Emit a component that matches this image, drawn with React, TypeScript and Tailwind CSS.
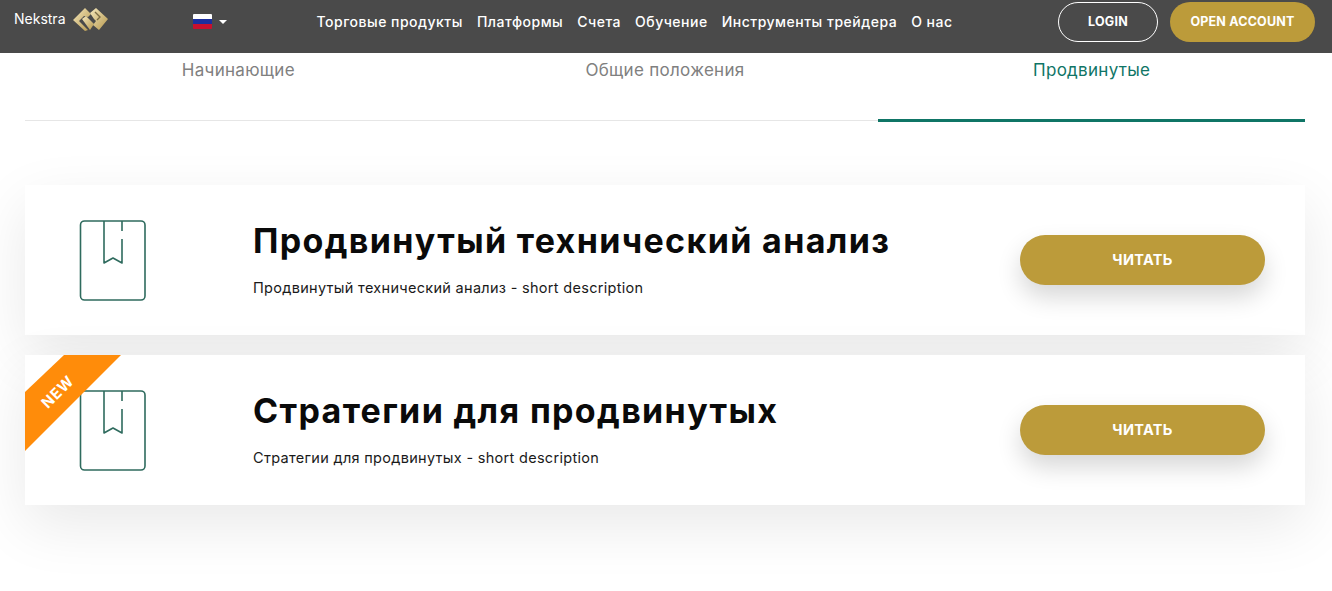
const font = "font-['Inter','Liberation_Sans',sans-serif]";

const navItems = [
  "Торговые продукты",
  "Платформы",
  "Счета",
  "Обучение",
  "Инструменты трейдера",
  "О нас",
];

const courses = [
  { title: "Продвинутый технический анализ", isNew: false },
  { title: "Стратегии для продвинутых", isNew: true },
];

function LogoMark() {
  return (
    <svg width="37" height="24" viewBox="0 0 37 24" className="ml-[6px]">
      <defs>
        <linearGradient id="gold" x1="0" y1="0" x2="1" y2="1">
          <stop offset="0" stopColor="#f5e8bd" />
          <stop offset="1" stopColor="#b5974d" />
        </linearGradient>
      </defs>
      <path d="M1 13 13 1l6 6-3 3-4-1-5 5 9 9-3 1z" fill="url(#gold)" />
      <path d="M10 12l4-3 8 8-4 6z" fill="url(#gold)" />
      <path d="M18 6l6-5 12 11-9 11-6-5 3-4-2-2z" fill="url(#gold)" />
      <path d="M23 5l5 5-3 3" stroke="#7c6c45" strokeWidth="1.4" fill="none" />
    </svg>
  );
}

function Flag() {
  return (
    <span className="flex h-[15px] w-[19px] flex-col overflow-hidden rounded-[1px]">
      <span className="h-[5px] bg-white" />
      <span className="h-[5px] bg-[#1c2f9e]" />
      <span className="h-[5px] bg-[#c8102e]" />
    </span>
  );
}

function BookIcon() {
  return (
    <svg width="67" height="81" viewBox="0 0 67 81" fill="none" stroke="#2f6b5e" strokeWidth="1.6" strokeLinejoin="round">
      <rect x="1.5" y="1" width="64.5" height="79" rx="4" />
      <path d="M25 1v42l9-5 9 5V19" />
      <path d="M43 1v10" />
    </svg>
  );
}

function NewRibbon() {
  return (
    <div className="absolute top-0 left-0 h-[96px] w-[96px] bg-[#ff8c0a] [clip-path:polygon(39px_0,96px_0,0_96px,0_37px)]">
      <span className="absolute top-[26px] left-[8px] w-[50px] -rotate-45 text-center text-[15px] font-bold tracking-[0.8px] text-white">
        NEW
      </span>
    </div>
  );
}

function CourseCard({ title, isNew }: { title: string; isNew: boolean }) {
  return (
    <div className="relative flex h-[150px] items-center bg-white pr-10 pl-[54px] shadow-[0_20px_60px_rgba(0,0,0,0.09)]">
      {isNew && <NewRibbon />}
      <BookIcon />
      <div className="ml-[107px] flex-1 pb-[2px]">
        <h2 className="text-[34px] leading-[40px] font-bold tracking-[1.35px] text-[#0a0a0a]">{title}</h2>
        <p className="mt-[17px] text-[14.5px] leading-5 tracking-[0.3px] text-[#1a1a1a]">{title} - short description</p>
      </div>
      <button className="h-[50px] w-[245px] rounded-[25px] bg-[#bc9b3a] text-[14.5px] font-bold tracking-[0.3px] text-white shadow-[0_12px_24px_rgba(0,0,0,0.16)]">
        ЧИТАТЬ
      </button>
    </div>
  );
}

export default function App() {
  return (
    <div className={`${font} h-[591px] w-[1332px] overflow-hidden bg-white`}>
      {/* шапка */}
      <header className="flex h-[53px] items-center bg-[#4a4a4a] pr-[17px] pb-[10px] pl-[14px] text-white">
        <div className="flex items-center pb-[5px]">
          <span className="text-[14px] leading-5">Nekstra</span>
          <LogoMark />
        </div>
        <div className="ml-[84px] flex items-center gap-[7px]">
          <Flag />
          <span className="h-0 w-0 border-x-[4px] border-t-[4px] border-x-transparent border-t-white" />
        </div>
        <nav className="ml-[90px] flex gap-[14px] text-[14px] font-medium tracking-[0.5px]">
          {navItems.map((item) => (
            <a key={item} className="whitespace-nowrap">{item}</a>
          ))}
        </nav>
        <div className="ml-auto flex gap-3 text-[12.5px] font-bold tracking-[0.2px]">
          <button className="h-10 w-[100px] rounded-[20px] border border-white pt-[2px]">LOGIN</button>
          <button className="h-10 w-[145px] rounded-[20px] bg-[#bc9b3a] pt-[2px]">OPEN ACCOUNT</button>
        </div>
      </header>

      <main className="pr-[27px] pl-[25px]">
        {/* вкладки */}
        <div className="grid h-[68px] grid-cols-3 border-b border-[#e6e6e6] text-center text-[17px] tracking-[0.3px]">
          <div className="pt-[5px] text-[#808080]">Начинающие</div>
          <div className="pt-[5px] text-[#808080]">Общие положения</div>
          <div className="-mb-[2px] border-b-[3px] border-[#0f7566] pt-[5px] text-[#0f7566]">Продвинутые</div>
        </div>

        <div className="mt-[64px] flex flex-col gap-5">
          {courses.map((course) => (
            <CourseCard key={course.title} title={course.title} isNew={course.isNew} />
          ))}
        </div>
      </main>
    </div>
  );
}
